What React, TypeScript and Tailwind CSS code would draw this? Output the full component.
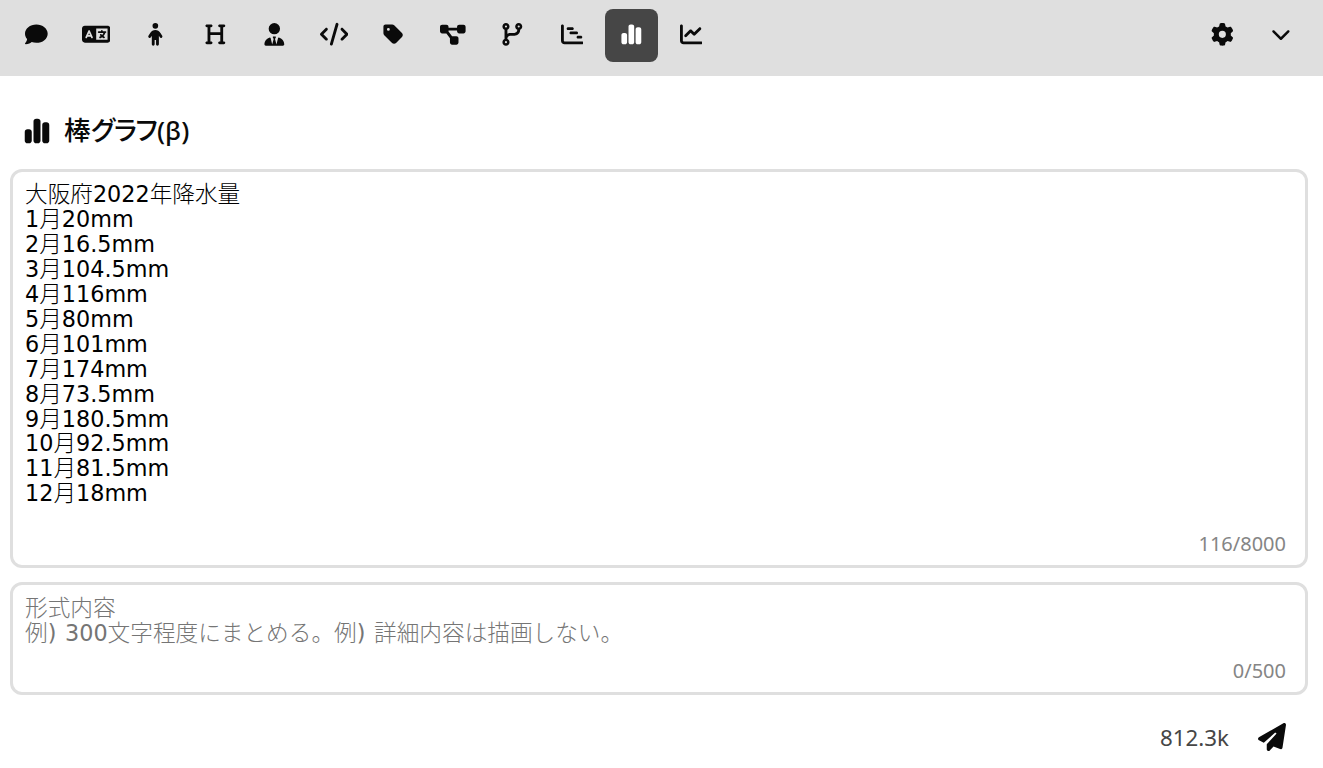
import React from "react";
import {
  FaComment, FaLanguage, FaChild, FaHeading, FaUserTie, FaCode, FaTag,
  FaDiagramProject, FaCodeBranch, FaChartGantt, FaChartSimple, FaChartLine,
  FaGear, FaChevronDown, FaPaperPlane,
} from "react-icons/fa6";
import type { IconType } from "react-icons";

const regular = "h-[22.7px] w-[22.7px]";
const wide = "h-[28.4px] w-[28.4px]";

const tools: { icon: IconType; size: string }[] = [
  { icon: FaComment, size: regular },
  { icon: FaLanguage, size: wide },
  { icon: FaChild, size: regular },
  { icon: FaHeading, size: regular },
  { icon: FaUserTie, size: regular },
  { icon: FaCode, size: wide },
  { icon: FaTag, size: regular },
  { icon: FaDiagramProject, size: "h-[25.6px] w-[25.6px]" },
  { icon: FaCodeBranch, size: regular },
  { icon: FaChartGantt, size: regular },
  { icon: FaChartSimple, size: regular },
  { icon: FaChartLine, size: regular },
];

const rows = [
  "大阪府2022年降水量", "1月20mm", "2月16.5mm", "3月104.5mm", "4月116mm", "5月80mm",
  "6月101mm", "7月174mm", "8月73.5mm", "9月180.5mm", "10月92.5mm", "11月81.5mm", "12月18mm",
];

function ToolButton({ icon: Icon, size, active = false }: { icon: IconType; size: string; active?: boolean }) {
  return (
    <button
      className={
        active
          ? "flex h-[53px] w-[53px] items-center justify-center rounded-[8px] bg-[#464646] pb-[2px] text-white"
          : "flex h-[53px] w-[53px] items-center justify-center rounded-[8px] pb-[2px] text-[#0a0a0a]"
      }
    >
      <Icon className={`${size} shrink-0`} />
    </button>
  );
}

function Line({ text }: { text: string }) {
  return (
    <div className="h-[24.92px] whitespace-pre">
      {text.split(/([0-9a-z.) ]+)/).map((part, i) =>
        i % 2 === 1 ? (
          <span key={i} className="font-['DejaVu_Sans',sans-serif] text-[22.3px] font-normal [word-spacing:1.6px]">{part}</span>
        ) : (
          <span key={i}>{part}</span>
        ),
      )}
    </div>
  );
}

export default function App() {
  return (
    <div className="flex h-[768px] w-full flex-col bg-white font-['Noto_Sans','Noto_Sans_CJK_JP',sans-serif] text-[#0a0a0a]">
      <header className="flex h-[76px] items-start justify-between bg-[#dfdfdf] pt-[9px] pr-[15px] pl-[10px]">
        <nav className="flex gap-[6.5px]">
          {tools.map((tool, i) => (
            <ToolButton key={i} icon={tool.icon} size={tool.size} active={i === 10} />
          ))}
        </nav>
        <div className="flex gap-[6.5px]">
          <ToolButton icon={FaGear} size={regular} />
          <ToolButton icon={FaChevronDown} size="mr-px mb-px h-[19.8px] w-[19.8px]" />
        </div>
      </header>

      <h1 className="flex h-[93px] items-center pt-[16px] pl-[23px] text-[26.5px] font-medium">
        <FaChartSimple className="h-[28px] w-[28px]" />
        <span className="mb-[2px] ml-[13px] flex items-baseline">
          <span className="font-['Noto_Sans_CJK_JP',sans-serif]">棒</span>
          <span className="font-['Noto_Sans_CJK_JP',sans-serif] tracking-[-5px]">グラフ</span>
          <span className="ml-[2px] font-['Noto_Sans',sans-serif] text-[26px]">(β)</span>
        </span>
      </h1>

      <main className="flex flex-col gap-[14px] pr-[15px] pl-[10px]">
        <section className="flex h-[399px] flex-col justify-between rounded-[12px] border-[3px] border-[#dfdfdf] pt-[9.4px] pr-[19px] pb-[7.5px] pl-[12px]">
          <div className="font-['Noto_Sans_CJK_JP',sans-serif] text-[22.65px] leading-[24.92px] font-light text-black">
            {rows.map((row) => <Line key={row} text={row} />)}
          </div>
          <div className="text-right text-[20px] leading-[28px] text-[#858585]">116/8000</div>
        </section>
        <section className="flex h-[113px] flex-col justify-between rounded-[12px] border-[3px] border-[#dfdfdf] pt-[10.2px] pr-[19px] pb-[7.5px] pl-[12px]">
          <div className="font-['Noto_Sans_CJK_JP',sans-serif] text-[22.65px] leading-[24.92px] font-light text-[#757575]">
            <Line text="形式内容" />
            <Line text="例) 300文字程度にまとめる。例) 詳細内容は描画しない。" />
          </div>
          <div className="text-right text-[20px] leading-[28px] text-[#858585]">0/500</div>
        </section>
      </main>

      <footer className="flex h-[73px] items-center justify-end gap-[29px] pt-[11px] pr-[37px]">
        <span className="pt-[2px] text-[22.3px] leading-[30px] text-[#464646]">812.3k</span>
        <FaPaperPlane className="h-[28px] w-[28px]" />
      </footer>
    </div>
  );
}
